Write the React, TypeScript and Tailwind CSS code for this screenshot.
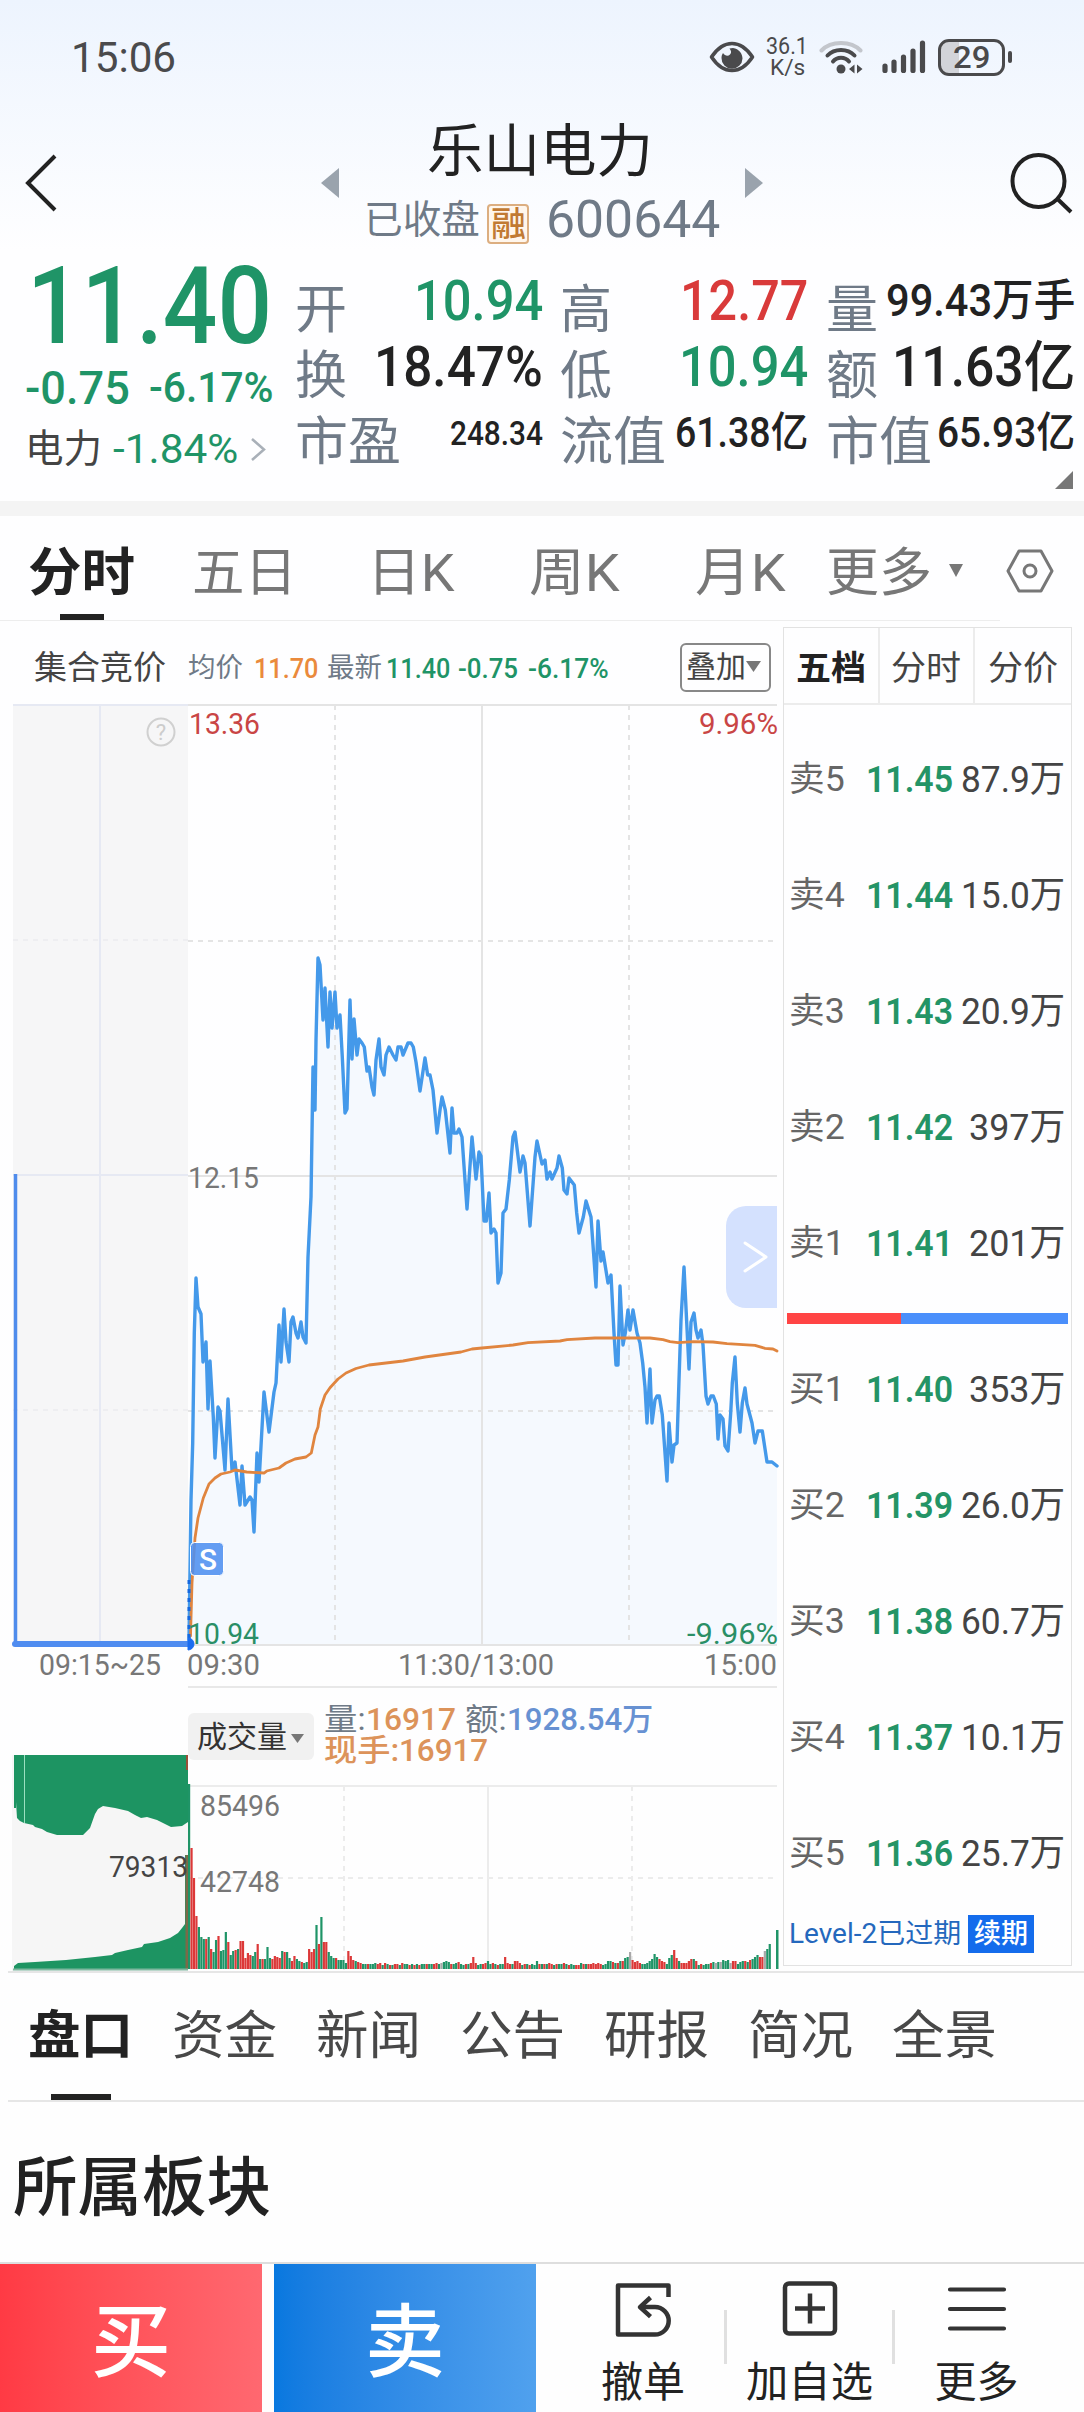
import { useLayoutEffect, useRef, useState, type ReactNode } from "react";

/* Text condensed or widened horizontally so that it fills its box. */
function Fit({ className, children }: { className: string; children: ReactNode }) {
  const box = useRef<HTMLSpanElement>(null);
  const inner = useRef<HTMLSpanElement>(null);
  const [k, setK] = useState(1);
  useLayoutEffect(() => {
    if (box.current && inner.current && inner.current.offsetWidth) {
      setK(box.current.clientWidth / inner.current.offsetWidth);
    }
  }, []);
  return (
    <span ref={box} className={`block shrink-0 leading-none ${className}`}>
      <span ref={inner} className="inline-block origin-left whitespace-nowrap" style={{ transform: `scaleX(${k})` }}>
        {children}
      </span>
    </span>
  );
}

const price: [number, number][] = [
  [189, 1640], [191, 1500], [192.7, 1443], [194.3, 1333], [196, 1278], [198, 1307], [201, 1314], [203, 1362], [206, 1342], [208, 1409],
  [210, 1361], [213.3, 1417], [215, 1458], [218, 1407], [220, 1411], [225, 1470], [228, 1399], [232, 1470], [235, 1462], [240, 1505],
  [242, 1466], [245, 1505], [250, 1497], [252, 1500], [254, 1532], [257, 1453], [259, 1482], [264, 1392], [269, 1432], [274, 1392],
  [276, 1383], [279, 1325], [281, 1362], [284, 1309], [286, 1342], [289, 1362], [291, 1322], [293, 1317], [296, 1333], [298, 1338],
  [301, 1322], [303, 1337], [306, 1343], [307, 1300], [308, 1257], [311, 1197], [312, 1133], [313, 1067], [315, 1110], [316, 1040],
  [318, 958], [320, 965], [323, 1020], [325, 988], [328, 1047], [330, 992], [332, 1028], [335, 992], [337, 1028], [340, 1015],
  [342.3, 1057], [345, 1113], [347, 1109], [350, 1000], [352, 1059], [354, 1019], [357, 1055], [359, 1039], [362, 1043], [364.3, 1047],
  [367, 1071], [369, 1067], [372, 1087], [374, 1095], [376, 1060], [379, 1039], [381, 1067], [384, 1075], [386, 1055], [389, 1047],
  [393, 1055], [396, 1060], [398, 1047], [401, 1047], [403, 1055], [408, 1043], [411, 1043], [413.3, 1047], [416, 1062], [420, 1091],
  [425, 1058], [427.7, 1075], [430, 1075], [433, 1090], [437, 1133], [440, 1110], [442, 1097], [445.3, 1110], [450, 1153], [452, 1108],
  [454, 1133], [457, 1133], [459, 1129], [462, 1137], [467, 1209], [472, 1137], [476, 1179], [479, 1152], [481, 1156], [484, 1221],
  [486.3, 1221], [489, 1193], [491, 1233], [494, 1229], [496, 1233], [498, 1283], [501, 1273], [503, 1213], [506, 1209], [509.3, 1180],
  [513, 1137], [515, 1132], [520, 1172], [523, 1156], [525, 1163], [530, 1226], [535, 1157], [537, 1141], [542, 1164], [545, 1160],
  [547, 1179], [550, 1172], [552, 1179], [557, 1168], [559, 1156], [562.3, 1168], [564, 1190], [567, 1194], [569, 1178], [574.3, 1185],
  [576.7, 1213], [579, 1233], [583.3, 1217], [586, 1201], [591, 1217], [596, 1287], [598, 1221], [601, 1261], [603, 1252], [608, 1283],
  [611, 1275], [614, 1333], [616, 1365], [618, 1365], [620, 1286], [623, 1345], [625.3, 1333], [628, 1310], [630, 1330], [633, 1310],
  [637, 1333], [640, 1343], [642.7, 1363], [645, 1387], [647, 1423], [650, 1369], [652, 1423], [655, 1400], [657, 1396], [659.3, 1396],
  [662.3, 1415], [667, 1481], [669, 1423], [672, 1462], [674, 1445], [677, 1443], [679, 1380], [681, 1320], [684, 1267], [689, 1369],
  [691, 1322], [694, 1313], [696, 1330], [698, 1338], [701, 1330], [703, 1345], [706, 1396], [708, 1404], [711, 1396], [713.3, 1396],
  [716.3, 1404], [718, 1439], [720, 1415], [723, 1419], [725, 1446], [728, 1451], [730.7, 1413], [732.3, 1383], [735, 1357], [737.3, 1403],
  [740, 1432], [742.3, 1403], [745, 1388], [747, 1404], [752, 1423], [755, 1443], [758, 1431], [762.3, 1431], [767, 1462], [772, 1462], [777, 1466],
];

const average: [number, number][] = [
  [190.5, 1636], [192, 1583], [195, 1538], [198, 1518], [203.3, 1498], [209, 1484], [215, 1478], [221, 1474], [230, 1472], [235, 1470],
  [246.7, 1472], [264, 1473], [266.7, 1471], [279, 1468], [286, 1463], [295, 1459], [306, 1457], [311.3, 1453], [315, 1435], [318, 1427],
  [320.3, 1409], [325, 1395], [330, 1387.7], [338, 1379], [346, 1373], [356, 1368.5], [369, 1365], [403, 1361], [425, 1357], [461, 1352],
  [472, 1349], [482, 1348], [513, 1345], [528, 1342.7], [560, 1341], [567, 1339.7], [595, 1338], [650, 1338], [663, 1339.7], [670, 1341.7],
  [678, 1342.7], [693, 1341.7], [713, 1342], [727, 1343.7], [755, 1345.3], [765, 1348.3], [773, 1349], [777, 1351],
];

const RED = "#dc3838";
const GREEN = "#1f9467";
const GREY = "#a8a8a8";

/* Minute volumes: height followed by r, g or x (rise, fall, flat). */
const volumes =
  "185g 121r 91r 53r 42g 32g 30g 30r 32g 20r 17g 29g 33r 18g 19g 37g 27r 14g 18g 19r 20g 28r 28r 11r 16r 14r 13g 17g 25r 10g 10r 10g 22g 11g 10r 13r 12r 11r 18g 17r 17g 11g 8r 13r 10g 8g 7r 6g 7g 20r 17r 20r 44g 25r 52g 27r 27r 17g 13g 11g 11r 9g 9g 9g 6g 18r 13r 9r 8g 7r 6r 5g 5g 5r 5g 5g 6g 5r 6r 4g 6r 5g 4r 4g 5r 5r 4g 6r 5g 5g 4r 5g 4r 5g 4r 5g 5g 5r 5g 5g 5r 6r 5g 6x 7g 8g 7g 5r 5g 6g 7r 5g 4g 5r 5g 6r 12r 6r 4g 5g 5r 6r 8g 5g 6r 5g 4r 5g 5g 12r 6r 5r 5g 8r 8r 6r 4g 5r 5g 4r 5g 4g 8g 5r 5g 5r 5g 6r 5r 4g 5r 5g 5g 6r 5g 4r 5g 4g 4r 4r 6g 5r 5g 5r 5r 6r 5r 6r 5r 4g 5g 8g 8g 7r 6g 6r 8g 8r 11g 12g 17x 9r 7r 8r 6r 5g 5g 6g 8g 10g 15g 12g 10r 8r 7r 5g 11g 14g 19r 11r 8g 6r 6r 6r 8r 10r 10g 8r 4g 5r 4g 5g 5g 6r 7g 6x 7g 7x 9g 8g 9g 6x 8r 8r 5g 7g 8g 8r 7g 9r 10g 12g 14g 12r 12r 18x 20g 25g"
    .split(" ")
    .map((v) => ({ h: parseInt(v, 10), c: v.endsWith("r") ? RED : v.endsWith("g") ? GREEN : GREY }));

const line = (pts: [number, number][]) => pts.map((p) => p.join(",")).join(" ");

function Label({ x, y, w, size = 29, color = "#777", children }: { x: number; y: number; w: number; size?: number; color?: string; children: string }) {
  return (
    <text x={x} y={y} textLength={w} lengthAdjust="spacingAndGlyphs" fontSize={size} fill={color}>
      {children}
    </text>
  );
}

function PriceChart() {
  return (
    <svg width="780" height="980" viewBox="0 700 780 980" className="block shrink-0">
      <rect x="13" y="705" width="175" height="940" fill="#f6f6f7" />
      <polygon points={`189,1645 ${line(price)} 777,1645`} fill="#f5f9fe" />
      <g stroke="#e4e4e4" strokeWidth="2" fill="none">
        <path d="M188 705H777M188 1176H777M188 1645H777M482 705V1645" />
        <path d="M188 941H777M188 1411H777M335 705V1645M629 705V1645" strokeDasharray="5 5" />
      </g>
      <path d="M13 705H188M100 705V1643M13 1175H188" stroke="#e6e9f3" strokeWidth="2" />
      <path d="M13 940H188M13 1410H188" stroke="#ececf0" strokeWidth="1.5" strokeDasharray="5 5" />
      <polyline points={line(price)} fill="none" stroke="#4499ea" strokeWidth="3.4" strokeLinejoin="round" strokeLinecap="round" />
      <polyline points={line(average)} fill="none" stroke="#e0853f" strokeWidth="2.8" strokeLinejoin="round" strokeLinecap="round" />
      <path d="M15.5 1174V1643" stroke="#4f8cec" strokeWidth="3.5" />
      <path d="M15 1644H188" stroke="#4f8cf0" strokeWidth="6" strokeLinecap="round" />
      <path d="M189 1580V1640" stroke="#1468e0" strokeWidth="3" strokeDasharray="4 5" />
      <path d="M188 1638a6 6 0 0 1 0 12z" fill="#1b6df0" stroke="#1b6df0" />
      <rect x="190.500" y="1542.500" width="33" height="33" rx="4" fill="#4f8ff0" fillOpacity=".88" stroke="#fff" strokeWidth="1" />
      <text x="199" y="1570" fontSize="29" textLength="18" lengthAdjust="spacingAndGlyphs" fill="#fff" fontWeight="500">S</text>
      <path d="M777 1206H746a20 20 0 0 0-20 20v62a20 20 0 0 0 20 20h31z" fill="#d4e1fe" />
      <path d="M745 1243l21 14-21 14" fill="none" stroke="#fff" strokeWidth="3" strokeLinecap="round" strokeLinejoin="round" />
      <circle cx="161" cy="732" r="13.500" fill="none" stroke="#d0d0d0" strokeWidth="2" />
      <text x="161" y="740" fontSize="22" textAnchor="middle" fill="#ccc">?</text>
      <Label x={189} y={734} w={71} color="#c94545">13.36</Label>
      <Label x={699} y={734} w={79} color="#c94545">9.96%</Label>
      <Label x={188} y={1188} w={71}>12.15</Label>
      <Label x={188} y={1644} w={71} color="#2a8f66">10.94</Label>
      <Label x={687} y={1644} w={91} color="#2a8f66">-9.96%</Label>
      <Label x={39} y={1675} w={122}>09:15~25</Label>
      <Label x={187} y={1675} w={73}>09:30</Label>
      <Label x={398} y={1675} w={156}>11:30/13:00</Label>
      <Label x={704} y={1675} w={73}>15:00</Label>
    </svg>
  );
}

function AuctionVolume() {
  return (
    <svg width="188" height="221" viewBox="0 1750 188 221" className="block shrink-0">
      <rect x="12" y="1755" width="176" height="216" fill="#f6f6f6" />
      <path
        d="M14 1755H188V1822L185 1824 182 1826 171 1827 157 1820 147 1817 141 1818 135 1815 128 1811 115 1808 103 1806 98 1809 95 1814 90 1828 83 1835H57L47 1832 42 1829 35 1827 33 1825 24 1823 20 1821 17 1818 16 1802V1808H14z"
        fill="#1d9462"
      />
      <path d="M24.500 1755V1823" stroke="#9be0c0" strokeWidth="1" />
      <path
        d="M14 1969V1966L18 1963 35 1962 66 1960 95 1957 112 1955 115 1953 128 1950 142 1947 144 1944 158 1942 170 1938 178 1933 182 1928 185 1924V1855H188V1969z"
        fill="#1d9462"
      />
      <path d="M187 1755V1770" stroke="#9a5038" strokeWidth="2" />
      <path d="M187 1855V1970" stroke="#7a6a48" strokeWidth="3" />
      <path d="M13 1969.500H188" stroke="#7fb79f" strokeWidth="2" />
      <Label x={109} y={1877} w={79} size={30} color="#444">79313</Label>
    </svg>
  );
}

function VolumeBars() {
  return (
    <svg width="592" height="187" viewBox="188 1784 592 187" className="block">
      <g stroke="#ececec" strokeWidth="2">
        <path d="M188 1786H777M488 1786V1970" />
        <path d="M188 1878H777M344 1786V1970M632 1786V1970" strokeDasharray="5 5" />
      </g>
      {volumes.map((v, i) => (
        <rect key={i} x={188 + i * 2.45} y={1969 - v.h} width="2.2" height={v.h} fill={v.c} />
      ))}
      <rect x="776" y="1930" width="2.500" height="39" fill={GREEN} />
      <Label x={200} y={1816} w={80} size={30}>85496</Label>
      <Label x={200} y={1892} w={80} size={30}>42748</Label>
    </svg>
  );
}

function Tri({ className }: { className: string }) {
  return (
    <svg viewBox="0 0 10 9" preserveAspectRatio="none" className={`block shrink-0 ${className}`}>
      <path d="M0 0H10L5 9z" fill="currentColor" />
    </svg>
  );
}

function StatusBar() {
  return (
    <div className="flex h-[114px] items-center text-[#4a4a4c]">
      <Fit className="ml-[71px] w-[105px] text-[43px]">15:06</Fit>
      <svg width="46" height="32" viewBox="0 0 46 32" className="ml-[533px] shrink-0">
        <path d="M2.500 16C8.500 7 15 2.500 23 2.500S37.500 7 43.500 16c-6 9-12.500 13.500-20.500 13.500S8.500 25 2.500 16z" fill="none" stroke="currentColor" strokeWidth="3.600" strokeLinejoin="round" />
        <path d="M24 7c6 1 9.500 5.500 9.500 10.500A10.500 10.500 0 0 1 12.500 17c0-2 .5-3.500 1.500-5 2 3 5 3.500 7 1.500s1-4-.5-6z" fill="currentColor" />
      </svg>
      <div className="ml-3 flex w-10 shrink-0 flex-col items-center">
        <Fit className="w-[42px] text-[23px]">36.1</Fit>
        <Fit className="-mt-px w-[35px] text-[22px]">K/s</Fit>
      </div>
      <svg width="44" height="34" viewBox="0 0 44 34" className="ml-3 shrink-0" fill="none" strokeWidth="4" strokeLinecap="round">
        <path d="M2.500 10.500C12 .500 32 .500 41.500 10.500" stroke="#c3c6cc" />
        <path d="M8.500 15.500c7-7.500 20-7.500 27 0" stroke="currentColor" />
        <path d="M14 21.500c4-5 12-5 16 0" stroke="currentColor" />
        <circle cx="22" cy="29" r="4.500" fill="currentColor" />
        <path d="M30 29l5.500-4.500v9zM43.500 29L38 24.500v9z" fill="currentColor" />
      </svg>
      <svg width="44" height="34" viewBox="0 0 44 34" className="ml-[19px] shrink-0" stroke="currentColor" strokeWidth="5.200" strokeLinecap="round">
        <path d="M3 26v4.500M12 22v8.500M21.500 17v13.500M31 11v19.500M40.500 3v27.500" />
      </svg>
      <div className="ml-3 flex h-[37px] w-[67px] shrink-0 items-center justify-center overflow-hidden rounded-[11px] border-[3px] border-current bg-[linear-gradient(90deg,#d2d4d9_29%,transparent_29%)]">
        <Fit className="w-[37px] text-[32px] font-medium">29</Fit>
      </div>
      <div className="ml-[3px] h-[12px] w-[4px] rounded-full bg-current" />
    </div>
  );
}

function Header() {
  return (
    <div className="flex h-[136px] text-[#222]">
      <svg width="32" height="58" viewBox="0 0 32 58" className="ml-[25px] mt-10 shrink-0" fill="none" stroke="currentColor" strokeWidth="4">
        <path d="M30 2L3 29l27 27" />
      </svg>
      <svg width="18" height="30" viewBox="0 0 18 30" className="ml-[264px] mt-[54px] shrink-0">
        <path d="M18 0V30L0 15z" fill="#9aa3ad" />
      </svg>
      <div className="ml-[26px] w-[358px] shrink-0">
        <Fit className="ml-[62px] mt-[9px] w-[226px] text-[57px]">乐山电力</Fit>
        <div className="mt-[14px] flex items-center text-[#6f7a87]">
          <Fit className="-ml-px w-[116px] text-[39px]">已收盘</Fit>
          <div className="ml-[7px] mt-[8px] flex h-[40px] w-[42px] items-center justify-center rounded border-2 border-[#dcae80] bg-[#fff6ec]">
            <Fit className="w-[35px] text-[34px] font-medium text-[#c17a33]">融</Fit>
          </div>
          <Fit className="ml-[17px] w-[174px] text-[52px]">600644</Fit>
        </div>
      </div>
      <svg width="18" height="30" viewBox="0 0 18 30" className="ml-[22px] mt-[54px] shrink-0">
        <path d="M0 0V30L18 15z" fill="#9aa3ad" />
      </svg>
      <svg width="64" height="62" viewBox="0 0 64 62" className="ml-[247px] mt-[38px] shrink-0" fill="none" stroke="currentColor" strokeWidth="4">
        <circle cx="28.500" cy="29" r="26" />
        <path d="M47 46.500L61 60" />
      </svg>
    </div>
  );
}

function Cell({ label, lw, value, vw }: { label: string; lw: string; value: string; vw: string }) {
  return (
    <div className="flex h-[66px] items-center justify-between">
      <Fit className={`mt-[19px] text-[52px] text-[#6f7a87] ${lw}`}>{label}</Fit>
      <Fit className={`font-medium ${vw}`}>{value}</Fit>
    </div>
  );
}

function Quote() {
  return (
    <div className="flex h-[251px] text-[#222]">
      <div className="w-[295px] shrink-0 text-[#1f9467]">
        <Fit className="ml-[27px] mt-[3px] w-[245px] text-[107px] font-medium">11.40</Fit>
        <div className="mt-[2px] flex h-[52px] items-center">
          <Fit className="ml-[25px] w-[105px] text-[46px] font-medium">-0.75</Fit>
          <Fit className="ml-[19px] w-[124px] text-[42px] font-medium">-6.17%</Fit>
        </div>
        <div className="mt-[9px] flex h-[52px] items-center">
          <Fit className="ml-[25px] w-[77px] text-[39px] text-[#444]">电力</Fit>
          <Fit className="ml-[11px] w-[125px] text-[41px]">-1.84%</Fit>
          <svg width="16" height="23" viewBox="0 0 16 23" className="ml-[12px]" fill="none" stroke="#a9b0b8" strokeWidth="2.500">
            <path d="M2 1l12 10.500L2 22" />
          </svg>
        </div>
      </div>
      <div className="w-[248px] shrink-0 pt-[18px]">
        <div className="text-[#1f9467]"><Cell label="开" lw="w-[52px]" value="10.94" vw="w-[129px] text-[55px]" /></div>
        <Cell label="换" lw="w-[52px]" value="18.47%" vw="w-[169px] text-[55px]" />
        <Cell label="市盈" lw="w-[106px]" value="248.34" vw="w-[93px] text-[33px]" />
      </div>
      <div className="ml-[17px] w-[248px] shrink-0 pt-[18px]">
        <div className="text-[#d93a3a]"><Cell label="高" lw="w-[52px]" value="12.77" vw="w-[128px] text-[55px]" /></div>
        <div className="text-[#1f9467]"><Cell label="低" lw="w-[52px]" value="10.94" vw="w-[129px] text-[55px]" /></div>
        <Cell label="流值" lw="w-[106px]" value="61.38亿" vw="w-[133px] text-[42px]" />
      </div>
      <div className="ml-[18px] w-[249px] shrink-0 pt-[18px]">
        <Cell label="量" lw="w-[52px]" value="99.43万手" vw="w-[189px] text-[44px]" />
        <Cell label="额" lw="w-[52px]" value="11.63亿" vw="w-[183px] text-[55px]" />
        <Cell label="市值" lw="w-[106px]" value="65.93亿" vw="w-[138px] text-[42px]" />
        <svg width="18" height="18" viewBox="0 0 18 18" className="ml-auto mr-[2px] mt-[5px] block">
          <path d="M18 0V18H0z" fill="#777" />
        </svg>
      </div>
    </div>
  );
}

function PeriodTabs() {
  return (
    <div className="relative flex h-[105px] text-[52px] text-[#777]">
      <div className="ml-[28px] w-[107px] shrink-0">
        <Fit className="mt-[32px] w-[107px] font-bold text-[#222]">分时</Fit>
        <div className="ml-[32px] mt-[14px] h-[6px] w-[44px] bg-[#222]" />
      </div>
      <Fit className="ml-[57px] mt-[32px] w-[105px]">五日</Fit>
      <Fit className="ml-[70px] mt-[32px] w-[88px]">日K</Fit>
      <Fit className="ml-[74px] mt-[32px] w-[91px]">周K</Fit>
      <Fit className="ml-[75px] mt-[32px] w-[91px]">月K</Fit>
      <Fit className="ml-[40px] mt-[32px] w-[106px]">更多</Fit>
      <Tri className="ml-[17px] mt-[48px] h-[13px] w-[14px]" />
      <svg width="48" height="44" viewBox="0 0 48 44" className="ml-[43px] mt-[33px] shrink-0" fill="none" stroke="currentColor" strokeWidth="3">
        <path d="M13 2H35L46 22 35 42H13L2 22z" strokeLinejoin="round" />
        <circle cx="24" cy="22" r="6" />
      </svg>
      <div className="absolute bottom-0 left-0 h-px w-[1000px] bg-[#ededed]" />
    </div>
  );
}

function ChartHeader() {
  return (
    <div className="flex h-[79px] items-center pt-[13px] text-[28px]">
      <Fit className="ml-[34px] w-[132px] text-[33px] text-[#444]">集合竞价</Fit>
      <Fit className="ml-[22px] mt-[3px] w-[55px] text-[27px] text-[#6f7a87]">均价</Fit>
      <Fit className="ml-[11px] mt-[3px] w-[64px] font-medium text-[#ea8a3c]">11.70</Fit>
      <Fit className="ml-[9px] mt-[3px] w-[55px] text-[27px] text-[#6f7a87]">最新</Fit>
      <Fit className="ml-[4px] mt-[3px] w-[64px] font-medium text-[#1f9467]">11.40</Fit>
      <Fit className="ml-[8px] mt-[3px] w-[60px] font-medium text-[#1f9467]">-0.75</Fit>
      <Fit className="ml-[10px] mt-[3px] w-[81px] font-medium text-[#1f9467]">-6.17%</Fit>
      <div className="ml-[71px] flex h-[49px] w-[91px] shrink-0 items-center rounded-md border-2 border-[#888] pl-[4px] text-[#444]">
        <Fit className="w-[60px] text-[30px]">叠加</Fit>
        <Tri className="-mt-[2px] h-[11px] w-[15px] text-[#777]" />
      </div>
    </div>
  );
}

function VolumeHeader() {
  return (
    <div className="ml-[188px] mt-[6px] flex h-[98px] w-[589px] border-t-2 border-[#e8e8e8]">
      <div className="mt-[25px] flex h-[47px] w-[126px] shrink-0 items-center rounded-md bg-[#f1f1f1] pl-[9px] text-[#333]">
        <Fit className="w-[90px] text-[30px]">成交量</Fit>
        <Tri className="ml-[4px] mt-[4px] h-[9px] w-[13px] text-[#777]" />
      </div>
      <div className="ml-[10px] mt-[16px] text-[31px] font-medium text-[#dc935a]">
        <div className="flex">
          <Fit className="w-[42px] font-normal text-[#6f7a87]">量:</Fit>
          <Fit className="w-[90px]">16917</Fit>
          <Fit className="ml-[9px] w-[42px] font-normal text-[#6f7a87]">额:</Fit>
          <Fit className="w-[146px] text-[#6791d2]">1928.54万</Fit>
        </div>
        <div className="flex">
          <Fit className="w-[75px]">现手:</Fit>
          <Fit className="w-[89px]">16917</Fit>
        </div>
      </div>
    </div>
  );
}

const asks = [["卖5", "11.45", "87.9万"], ["卖4", "11.44", "15.0万"], ["卖3", "11.43", "20.9万"], ["卖2", "11.42", "397万"], ["卖1", "11.41", "201万"]];
const bids = [["买1", "11.40", "353万"], ["买2", "11.39", "26.0万"], ["买3", "11.38", "60.7万"], ["买4", "11.37", "10.1万"], ["买5", "11.36", "25.7万"]];

function Level({ row }: { row: string[] }) {
  return (
    <div className="flex h-[116px] items-center pl-[5px] text-[37px]">
      <Fit className="w-[56px] text-[35px] text-[#666]">{row[0]}</Fit>
      <Fit className="ml-[21px] w-[87px] font-semibold text-[#249466]">{row[1]}</Fit>
      <Fit className={`mr-[6px] text-[#444] ml-auto ${row[2].length === 5 ? "w-[104px]" : "w-[96px]"}`}>{row[2]}</Fit>
    </div>
  );
}

function OrderBook() {
  return (
    <div className="mt-[6px] h-[1339px] w-[289px] shrink-0 border border-[#e2e2e2]">
      <div className="grid h-[77px] grid-cols-3 divide-x-2 divide-[#ececec] border-b-2 border-[#ececec] text-[34px] text-[#444]">
        <div className="flex items-center justify-center pt-[5px]"><Fit className="w-[70px] font-bold text-[#222]">五档</Fit></div>
        <div className="flex items-center justify-center pt-[5px]"><Fit className="w-[70px]">分时</Fit></div>
        <div className="flex items-center justify-center pt-[5px]"><Fit className="w-[70px]">分价</Fit></div>
      </div>
      <div className="pt-[16px]">{asks.map((r) => <Level key={r[0]} row={r} />)}</div>
      <div className="mx-[3px] mt-[12px] flex h-[11px]">
        <div className="w-[114px] bg-[#ff4444]" />
        <div className="grow bg-[#4a8ffb]" />
      </div>
      <div className="pt-[7px]">{bids.map((r) => <Level key={r[0]} row={r} />)}</div>
      <div className="mt-[4px] flex items-center pl-[5px] text-[27px]">
        <Fit className="w-[172px] text-[#2468bd]">Level-2已过期</Fit>
        <div className="ml-[7px] flex h-[38px] w-[66px] items-center justify-center bg-[#146cec]">
          <Fit className="w-[54px] font-medium text-white">续期</Fit>
        </div>
      </div>
    </div>
  );
}

function InfoTabs() {
  return (
    <div className="ml-[8px] flex h-[131px] border-b-2 border-t-2 border-[#e6e6e6] pl-[20px] text-[52px] text-[#484848]">
      <div className="w-[105px] shrink-0">
        <Fit className="mt-[38px] w-[105px] font-bold text-[#222]">盘口</Fit>
        <div className="ml-[23px] mt-[31px] h-[6px] w-[60px] bg-[#222]" />
      </div>
      {["资金", "新闻", "公告", "研报", "简况", "全景"].map((t) => (
        <Fit key={t} className="ml-[39px] mt-[38px] w-[105px]">{t}</Fit>
      ))}
    </div>
  );
}

function BottomBar() {
  return (
    <div className="flex h-[150px] border-t-2 border-[#dedede] text-[42px] text-[#222]">
      <div className="flex w-[262px] items-center justify-center bg-linear-to-r from-[#ff3a44] to-[#ff6870] pt-[10px] text-white">
        <Fit className="w-[80px] text-[80px] font-medium">买</Fit>
      </div>
      <div className="ml-3 flex w-[262px] items-center justify-center bg-linear-to-r from-[#0878df] to-[#50a1ee] pt-[10px] text-white">
        <Fit className="w-[80px] text-[80px] font-medium">卖</Fit>
      </div>
      <div className="flex w-[188px] flex-col items-center pl-[26px]">
        <svg width="58" height="58" viewBox="0 0 58 58" className="-ml-px mt-[17px]" fill="none" stroke="#333" strokeWidth="4.500" strokeLinejoin="round">
          <path d="M54.500 16V4.500H4V53.500H41a13.700 13.700 0 0 0 0-27.400H26" />
          <path d="M36.500 16.500L26 26.200l10.500 9.500" />
        </svg>
        <Fit className="mt-[23px] w-[84px]">撤单</Fit>
      </div>
      <div className="mt-[46px] h-[54px] w-[3px] bg-[#e0e0e0]" />
      <div className="flex w-[165px] flex-col items-center">
        <svg width="58" height="58" viewBox="0 0 58 58" className="mt-[16px]" fill="none" stroke="#333" strokeWidth="4.500">
          <rect x="4" y="3.500" width="50" height="50" rx="4" />
          <path d="M29 13.500V43.500M14 28.500H44" />
        </svg>
        <Fit className="mt-[24px] w-[127px]">加自选</Fit>
      </div>
      <div className="mt-[46px] h-[54px] w-[3px] bg-[#e0e0e0]" />
      <div className="flex w-[163px] flex-col items-center">
        <svg width="60" height="50" viewBox="0 0 60 50" className="mt-[20px]" fill="none" stroke="#333" strokeWidth="4.200" strokeLinecap="round">
          <path d="M3 5.500H57M3 25H57M3 44.500H57" />
        </svg>
        <Fit className="mt-[28px] w-[84px]">更多</Fit>
      </div>
    </div>
  );
}

export default function App() {
  return (
    <div className="h-[2412px] w-[1084px] overflow-hidden bg-[linear-gradient(180deg,#edf4fe_0px,#fefeff_250px,#fefefe_100%)] font-['Roboto','Noto_Sans_CJK_SC',sans-serif]">
      <StatusBar />
      <Header />
      <Quote />
      <div className="h-[15px] bg-[#f4f4f4]" />
      <PeriodTabs />
      <div className="flex h-[1350px]">
        <div className="w-[783px] shrink-0">
          <ChartHeader />
          <PriceChart />
          <VolumeHeader />
        </div>
        <OrderBook />
      </div>
      <div className="-mt-[221px] flex h-[221px] w-[780px] items-end">
        <AuctionVolume />
        <VolumeBars />
      </div>
      <InfoTabs />
      <Fit className="ml-[13px] mt-[54px] w-[258px] text-[65px] font-medium text-[#222]">所属板块</Fit>
      <div className="h-[41px]" />
      <BottomBar />
    </div>
  );
}
